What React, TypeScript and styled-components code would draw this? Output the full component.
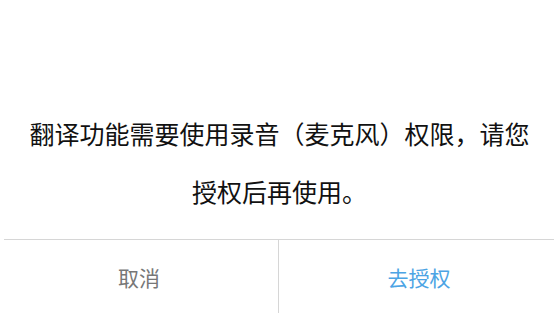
import React from 'react';
import styled, { createGlobalStyle } from 'styled-components';

const GlobalStyle = createGlobalStyle`
  html, body {
    margin: 0;
    padding: 0;
    background: #fff;
  }
  body {
    font-family: "Noto Sans CJK SC", "Noto Sans", sans-serif;
  }
`;

const Dialog = styled.div`
  width: 559px;
  height: 313px;
  display: flex;
  flex-direction: column;
  background: #fff;
`;

const Message = styled.div`
  flex: 1;
  padding: 104px 24px 0;
  font-size: 25px;
  line-height: 58px;
  color: #111;
  text-align: center;
`;

const Divider = styled.div`
  height: 1px;
  margin: 0 5px 0 4px;
  background: #d6d6d6;
`;

const Footer = styled.div`
  height: 73px;
  display: grid;
  grid-template-columns: 278px 1px 1fr;
`;

const Separator = styled.div`
  background: #d6d6d6;
`;

const Action = styled.button<{ $primary?: boolean }>`
  border: none;
  background: transparent;
  padding: 0;
  font-family: inherit;
  font-size: 21px;
  color: ${p => (p.$primary ? '#4ca4e4' : '#777')};
  cursor: pointer;
`;

export default function App() {
  return (
    <>
      <GlobalStyle />
      <Dialog>
        <Message>翻译功能需要使用录音（麦克风）权限，请您授权后再使用。</Message>
        <Divider />
        <Footer>
          <Action>取消</Action>
          <Separator />
          <Action $primary>去授权</Action>
        </Footer>
      </Dialog>
    </>
  );
}
